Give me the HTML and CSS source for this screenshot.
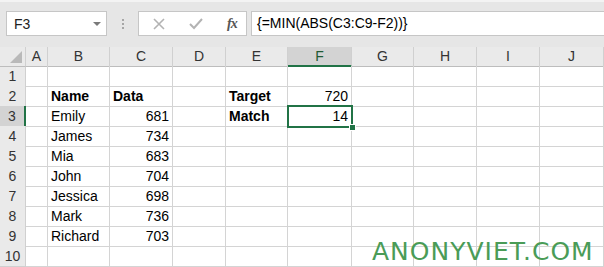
FILE: index.html
```html
<!DOCTYPE html>
<html lang="en">
<head>
    <meta charset="UTF-8">
    <title>Excel - MIN ABS</title>
    <link rel="stylesheet" href="styles.css">
</head>
<body>
    <div class="toolbar">
        <div class="name-box">
            <span>F3</span>
            <span class="caret"></span>
        </div>
        <div class="grip">
            <span></span><span></span><span></span>
        </div>
        <div class="buttons">
            <svg class="btn-x" width="12" height="12" viewBox="0 0 12 12">
                <path d="M1 1 L11 11 M11 1 L1 11" stroke="#b3b3b3" stroke-width="1.6" fill="none"/>
            </svg>
            <svg class="btn-ok" width="14" height="12" viewBox="0 0 14 12">
                <path d="M1 6 L5 10 L13 1" stroke="#b3b3b3" stroke-width="2" fill="none"/>
            </svg>
            <span class="fx">fx</span>
        </div>
        <div class="formula">{=MIN(ABS(C3:C9-F2))}</div>
    </div>

    <div class="sheet">
        <div class="row head">
            <div class="cell corner"><span class="tri"></span></div>
            <div class="cell">A</div>
            <div class="cell">B</div>
            <div class="cell">C</div>
            <div class="cell">D</div>
            <div class="cell">E</div>
            <div class="cell active-col">F</div>
            <div class="cell">G</div>
            <div class="cell">H</div>
            <div class="cell">I</div>
            <div class="cell">J</div>
        </div>
        <div class="row">
            <div class="cell rh">1</div>
            <div class="cell"></div><div class="cell"></div><div class="cell"></div><div class="cell"></div><div class="cell"></div>
            <div class="cell"></div><div class="cell"></div><div class="cell"></div><div class="cell"></div><div class="cell"></div>
        </div>
        <div class="row">
            <div class="cell rh">2</div>
            <div class="cell"></div>
            <div class="cell bold">Name</div>
            <div class="cell bold">Data</div>
            <div class="cell"></div>
            <div class="cell bold">Target</div>
            <div class="cell num">720</div>
            <div class="cell"></div><div class="cell"></div><div class="cell"></div><div class="cell"></div>
        </div>
        <div class="row">
            <div class="cell rh active-row">3</div>
            <div class="cell"></div>
            <div class="cell">Emily</div>
            <div class="cell num">681</div>
            <div class="cell"></div>
            <div class="cell bold">Match</div>
            <div class="cell num selected">14<span class="handle"></span></div>
            <div class="cell"></div><div class="cell"></div><div class="cell"></div><div class="cell"></div>
        </div>
        <div class="row">
            <div class="cell rh">4</div>
            <div class="cell"></div>
            <div class="cell">James</div>
            <div class="cell num">734</div>
            <div class="cell"></div><div class="cell"></div><div class="cell"></div>
            <div class="cell"></div><div class="cell"></div><div class="cell"></div><div class="cell"></div>
        </div>
        <div class="row">
            <div class="cell rh">5</div>
            <div class="cell"></div>
            <div class="cell">Mia</div>
            <div class="cell num">683</div>
            <div class="cell"></div><div class="cell"></div><div class="cell"></div>
            <div class="cell"></div><div class="cell"></div><div class="cell"></div><div class="cell"></div>
        </div>
        <div class="row">
            <div class="cell rh">6</div>
            <div class="cell"></div>
            <div class="cell">John</div>
            <div class="cell num">704</div>
            <div class="cell"></div><div class="cell"></div><div class="cell"></div>
            <div class="cell"></div><div class="cell"></div><div class="cell"></div><div class="cell"></div>
        </div>
        <div class="row">
            <div class="cell rh">7</div>
            <div class="cell"></div>
            <div class="cell">Jessica</div>
            <div class="cell num">698</div>
            <div class="cell"></div><div class="cell"></div><div class="cell"></div>
            <div class="cell"></div><div class="cell"></div><div class="cell"></div><div class="cell"></div>
        </div>
        <div class="row">
            <div class="cell rh">8</div>
            <div class="cell"></div>
            <div class="cell">Mark</div>
            <div class="cell num">736</div>
            <div class="cell"></div><div class="cell"></div><div class="cell"></div>
            <div class="cell"></div><div class="cell"></div><div class="cell"></div><div class="cell"></div>
        </div>
        <div class="row">
            <div class="cell rh">9</div>
            <div class="cell"></div>
            <div class="cell">Richard</div>
            <div class="cell num">703</div>
            <div class="cell"></div><div class="cell"></div><div class="cell"></div>
            <div class="cell"></div><div class="cell"></div><div class="cell"></div><div class="cell"></div>
        </div>
        <div class="row">
            <div class="cell rh">10</div>
            <div class="cell"></div><div class="cell"></div><div class="cell"></div><div class="cell"></div><div class="cell"></div>
            <div class="cell"></div><div class="cell"></div><div class="cell"></div><div class="cell"></div><div class="cell"></div>
        </div>
        <div class="watermark">ANONYVIET.COM</div>
    </div>
</body>
</html>
```

FILE: styles.css
```css
body {
    margin: 0;
    width: 604px;
    height: 267px;
    overflow: hidden;
    background-color: #ffffff;
    font-family: 'Liberation Sans', Arial, sans-serif;
    font-size: 14px;
    color: #000;
}
.toolbar {
    height: 47px;
    box-sizing: border-box;
    background-color: #e6e6e6;
    border-top: 2px solid #f3f3f3;
    display: flex;
    align-items: flex-start;
    padding: 9px 0 0 6px;
}
.name-box {
    width: 101px;
    height: 25px;
    box-sizing: border-box;
    background: #fff;
    border: 1px solid #c6c6c6;
    display: flex;
    align-items: center;
    justify-content: space-between;
    padding: 0 5px 0 7px;
    color: #222;
}
.caret {
    width: 0;
    height: 0;
    border-left: 4px solid transparent;
    border-right: 4px solid transparent;
    border-top: 4px solid #7a7a7a;
}
.grip {
    width: 31px;
    height: 25px;
    display: flex;
    flex-direction: column;
    align-items: center;
    justify-content: center;
    gap: 2px;
}
.grip span {
    width: 2px;
    height: 2px;
    background: #a6a6a6;
}
.buttons {
    width: 109px;
    height: 25px;
    box-sizing: border-box;
    background: #fff;
    border: 1px solid #c6c6c6;
    display: flex;
    align-items: center;
    padding-left: 14px;
}
.btn-x {
    margin-right: 24px;
}
.btn-ok {
    margin-right: 24px;
}
.fx {
    font-family: 'Liberation Serif', 'Times New Roman', serif;
    font-style: italic;
    font-weight: bold;
    font-size: 14px;
    color: #555;
    letter-spacing: -1px;
}
.formula {
    flex: 1;
    height: 25px;
    box-sizing: border-box;
    margin-left: 4px;
    background: #fff;
    border: 1px solid #c6c6c6;
    border-right: none;
    padding-left: 5px;
    line-height: 23px;
}
.sheet {
    position: relative;
}
.row {
    display: grid;
    grid-template-columns: 26px 22px 62px 63px 53px 62px 64px 62px 63px 63px 64px;
    height: 20px;
}
.cell {
    box-sizing: border-box;
    border-right: 1px solid #d4d4d4;
    border-bottom: 1px solid #d4d4d4;
    padding: 0 3px;
    line-height: 20px;
    white-space: nowrap;
    overflow: visible;
}
.head {
    height: 19px;
}
.head .cell {
    background: #eaeaea;
    border-color: #d0d0d0;
    text-align: center;
    color: #333;
    line-height: 18px;
    border-bottom-color: #bdbdbd;
}
.corner {
    position: relative;
}
.tri {
    position: absolute;
    right: 3px;
    bottom: 3px;
    width: 0;
    height: 0;
    border-left: 12px solid transparent;
    border-bottom: 12px solid #b9b9b9;
}
.head .active-col {
    background: #d3d3d3;
    border-bottom: 2px solid #217346;
    color: #1f5a33;
}
.rh {
    background: #eaeaea;
    text-align: center;
    color: #333;
    padding: 0;
    border-color: #d0d0d0;
}
.active-row {
    background: #d3d3d3;
    border-right: 2px solid #217346;
}
.bold {
    font-weight: bold;
}
.num {
    text-align: right;
}
.selected {
    position: relative;
    z-index: 1;
    outline: 2px solid #217346;
    outline-offset: -1px;
}
.handle {
    position: absolute;
    right: -5px;
    bottom: -5px;
    width: 5px;
    height: 5px;
    background: #217346;
    border: 1px solid #fff;
}
.watermark {
    position: absolute;
    left: 372px;
    bottom: 2px;
    font-family: 'DejaVu Sans', sans-serif;
    font-size: 25px;
    line-height: 25px;
    color: #4a9c57;
    letter-spacing: 1px;
}
```
